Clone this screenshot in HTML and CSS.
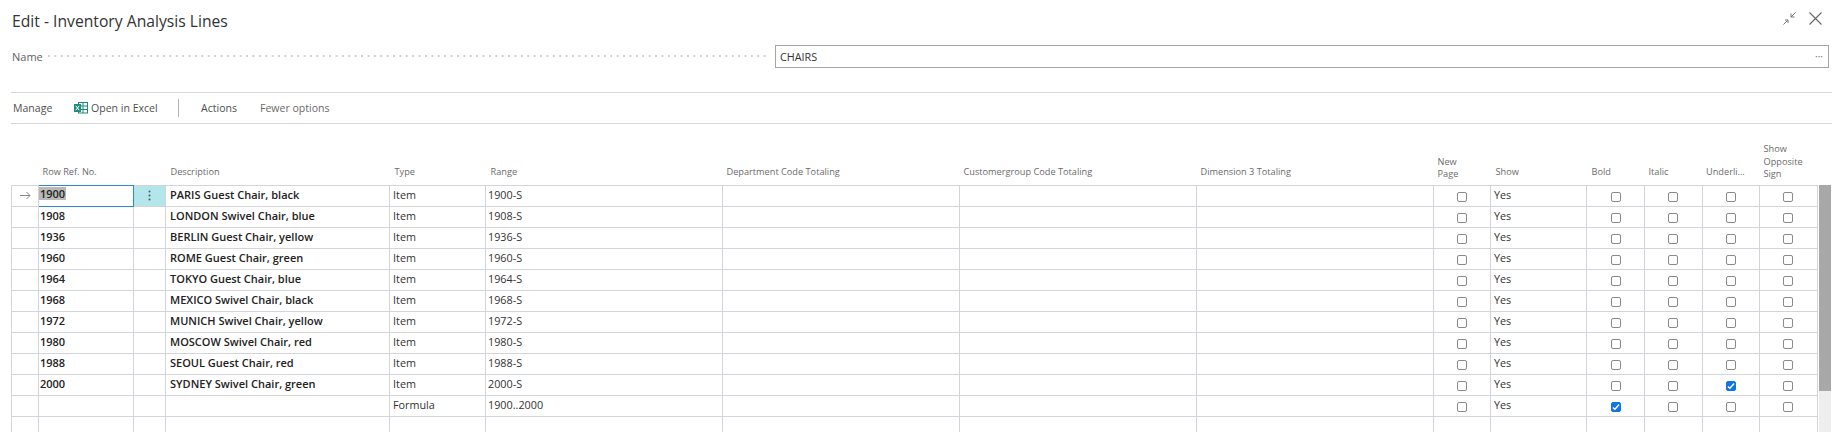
FILE: index.html
```html
<!DOCTYPE html>
<html lang="en">
<head>
<meta charset="utf-8">
<title>Edit - Inventory Analysis Lines</title>
<link rel="stylesheet" href="styles.css">
</head>
<body>
<div class="page">
  <header class="titlebar">
    <h1 class="title">Edit - Inventory Analysis Lines</h1>
    <div class="window-actions">
      <svg class="ic-collapse" width="13" height="13" viewBox="0 0 13 13"><path d="M12.500.5 8 5M8 1.500V5h3.500M.5 12.500 5 8M2 8h3v3" fill="none" stroke="#777" stroke-width="1"/></svg>
      <svg class="ic-close" width="13" height="13" viewBox="0 0 13 13"><path d="M.5.5l12 12M12.500.5l-12 12" fill="none" stroke="#666" stroke-width="1.100"/></svg>
    </div>
  </header>
  <div class="field-row">
    <span class="field-label">Name</span>
    <span class="leader"></span>
    <div class="field-box"><span>CHAIRS</span><span class="more">···</span></div>
  </div>
  <nav class="toolbar">
    <span class="tool tool-manage">Manage</span>
    <span class="tool tool-excel">
      <svg width="14" height="12" viewBox="0 0 14 12"><rect x="4.500" y=".5" width="9" height="10.500" fill="#fff" stroke="#1e8a7a"/><path d="M4.500 4h9M4.500 7.500h9M9 .5v10.500" stroke="#1e8a7a" fill="none"/><rect x="0" y="2" width="7" height="8" fill="#1e8a7a"/><path d="M1.800 3.800 5.200 8.200M5.200 3.800 1.800 8.200" stroke="#fff" stroke-width="1"/></svg>
      Open in Excel
    </span>
    <span class="divider"></span>
    <span class="tool tool-actions">Actions</span>
    <span class="tool tool-fewer">Fewer options</span>
  </nav>
  <div class="grid-wrap">
    <table class="grid">
      <colgroup>
        <col class="c-ind"><col class="c-ref"><col class="c-menu"><col class="c-desc"><col class="c-type"><col class="c-range"><col class="c-dim"><col class="c-dim"><col class="c-dim"><col class="c-np"><col class="c-show"><col class="c-bold"><col class="c-chk"><col class="c-chk"><col class="c-chk">
      </colgroup>
      <thead>
        <tr>
          <th></th><th colspan="2">Row Ref. No.</th><th class="nudge">Description</th><th class="nudge">Type</th><th class="nudge">Range</th><th>Department Code Totaling</th><th>Customergroup Code Totaling</th><th>Dimension 3 Totaling</th><th class="multi">New<br>Page</th><th class="nudge">Show</th><th class="nudge">Bold</th><th>Italic</th><th>Underli...</th><th class="multi">Show<br>Opposite<br>Sign</th>
        </tr>
      </thead>
      <tbody id="rows"></tbody>
    </table>
    <div class="scrollbar"><div class="thumb"></div></div>
  </div>
</div>
<script src="app.js"></script>
</body>
</html>
```
FILE: app.js
```js
var data = [
  ["1900","PARIS Guest Chair, black","Item","1900-S"],
  ["1908","LONDON Swivel Chair, blue","Item","1908-S"],
  ["1936","BERLIN Guest Chair, yellow","Item","1936-S"],
  ["1960","ROME Guest Chair, green","Item","1960-S"],
  ["1964","TOKYO Guest Chair, blue","Item","1964-S"],
  ["1968","MEXICO Swivel Chair, black","Item","1968-S"],
  ["1972","MUNICH Swivel Chair, yellow","Item","1972-S"],
  ["1980","MOSCOW Swivel Chair, red","Item","1980-S"],
  ["1988","SEOUL Guest Chair, red","Item","1988-S"],
  ["2000","SYDNEY Swivel Chair, green","Item","2000-S",[0,0,1,0]],
  ["","","Formula","1900..2000",[1,0,0,0]],
  ["","","","",null,true]
];
function box(on){ return '<span class="cb'+(on?' on':'')+'">'+(on?'<svg width="9" height="8" viewBox="0 0 9 8"><path d="M1 4.500 3.300 6.500 8 1.200" fill="none" stroke="#fff" stroke-width="1.600"/></svg>':'')+'</span>'; }
var html = "";
data.forEach(function(r,i){
  var flags = r[4] || [0,0,0,0], empty = r[5];
  var arrow = i===0 ? '<svg width="11" height="9" viewBox="0 0 11 9"><path d="M0 4.500h10M6.500 1 10 4.500 6.500 8" fill="none" stroke="#8a8886"/></svg>' : '';
  var ref = i===0 ? '<div class="active"><span class="sel">1900</span></div>' : r[0];
  var menu = i===0 ? '<svg class="kebab" width="3" height="11" viewBox="0 0 3 11"><circle cx="1.500" cy="1.500" r="1" fill="#555"/><circle cx="1.500" cy="5.500" r="1" fill="#555"/><circle cx="1.500" cy="9.500" r="1" fill="#555"/></svg>' : '';
  html += '<tr>'+
    '<td class="ind">'+arrow+'</td>'+
    '<td class="ref'+(i===0?' ref-active':'')+'">'+ref+'</td>'+
    '<td class="menu'+(i===0?' menu-active':'')+'">'+menu+'</td>'+
    '<td class="desc">'+r[1]+'</td>'+
    '<td class="txt">'+r[2]+'</td><td>'+r[3]+'</td><td></td><td></td><td></td>'+
    '<td class="ck">'+(empty?'':box(0))+'</td>'+
    '<td class="txt">'+(empty?'':'Yes')+'</td>'+
    flags.map(function(f){return '<td class="ck">'+(empty?'':box(f))+'</td>';}).join('')+
    '</tr>';
});
document.getElementById("rows").innerHTML = html;
```
FILE: styles.css
```css
* { box-sizing: border-box; }
html, body { margin: 0; height: 432px; overflow: hidden; background: #fff; }
body { font-family: "Open Sans", "Noto Sans", sans-serif; color: #212121; }
.page { width: 1832px; height: 432px; overflow: hidden; }
.titlebar { height: 38px; padding: 10px 10px 0 12px; display: flex; justify-content: space-between; align-items: flex-start; }
.title { margin: 0; font-size: 15.700px; line-height: 22px; font-weight: 400; color: #333; }
.window-actions { display: flex; gap: 13px; align-items: center; padding-top: 2px; }
.field-row { height: 30px; margin-top: 3px; padding-left: 12px; display: flex; align-items: center; }
.field-label { font-size: 11px; color: #616161; width: 36px; }
.leader { width: 719px; height: 2px; margin-right: 8px; background-image: linear-gradient(to right, #cfcfcf 2px, transparent 2px); background-size: 6.400px 2px; }
.field-box { width: 1054px; height: 23px; border: 1px solid #a6a6a6; display: flex; justify-content: space-between; align-items: center; padding: 0 4px; font-size: 10.800px; color: #333; }
.more { color: #777; font-size: 10px; margin-right: 1px; }
.toolbar { margin: 21px 0 0 11px; height: 32px; border-top: 1px solid #d6d6d6; border-bottom: 1px solid #d6d6d6; display: flex; align-items: center; font-size: 10.550px; color: #505050; }
.tool { display: inline-flex; align-items: center; }
.tool-manage { margin-left: 2px; width: 61px; }
.tool-excel { width: 104px; gap: 3px; }
.divider { width: 1px; height: 18px; background: #aeb4bc; }
.tool-actions { margin-left: 22px; width: 59px; }
.tool-fewer { color: #6b6b6b; }
.grid-wrap { margin-top: 14px; display: flex; align-items: flex-start; padding-left: 11px; }
.grid { border-collapse: collapse; table-layout: fixed; width: 1806px; font-size: 10.800px; }
.c-ind { width: 27px; } .c-ref { width: 95px; } .c-menu { width: 32px; } .c-desc { width: 224px; }
.c-type { width: 96px; } .c-range { width: 237px; } .c-dim { width: 237px; }
.c-np { width: 57px; } .c-show { width: 96px; } .c-bold { width: 58px; } .c-chk { width: 57.500px; }
th { height: 47px; font-weight: 400; font-size: 9.200px; line-height: 12px; color: #6b6b6b; text-align: left; padding: 0 4px 7px; vertical-align: bottom; white-space: nowrap; }
th.multi { padding-bottom: 4px; line-height: 12.500px; }
th.nudge { padding-left: 5px; }
td { height: 21px; border: 1px solid #d4d5da; padding: 0 2px; white-space: nowrap; overflow: hidden; color: #333; line-height: 18px; vertical-align: top; }
td.txt { padding-left: 3px; }
td.ind { text-align: center; padding: 0; vertical-align: middle; }
td.ind svg { display: block; margin: 0 auto; }
td.ref, td.desc { font-weight: 600; color: #222; font-size: 11px; }
td.ref { padding-left: 1px; }
td.desc { padding-left: 4px; }
td.ref-active { padding: 0; border: 1px solid #2b88d8; }
.active { height: 19px; padding: 1px 0 0 0; line-height: 13px; }
.sel { background: #b9b9b9; padding: 0 1px; display: inline-block; }
td.menu-active { background: #b2e6ea; text-align: center; padding: 0; vertical-align: middle; }
.kebab { display: block; margin: 0 auto; }
td.ck { text-align: center; padding: 0; vertical-align: middle; }
.cb { display: inline-flex; align-items: center; justify-content: center; width: 10px; height: 10px; border: 1px solid #8a8a8a; border-radius: 2px; vertical-align: middle; background: #fff; }
.cb.on { background: #0f75e6; border-color: #0f75e6; }
.scrollbar { width: 12px; flex: none; height: 248px; background: #eeeeee; margin: 47px 0 0 1px; }
.thumb { height: 206px; background: #a8a8a8; }
```
